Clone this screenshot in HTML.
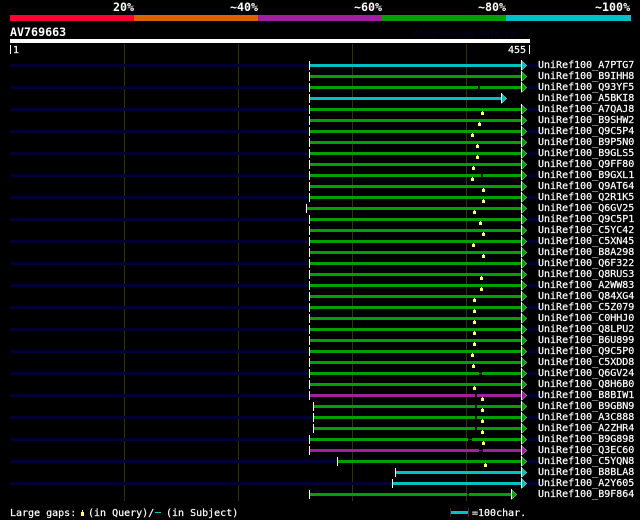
<!DOCTYPE html>
<html>
<head>
<meta charset="utf-8">
<style>
html,body{margin:0;padding:0;background:#000;width:640px;height:520px;overflow:hidden}
svg{display:block}
rect{shape-rendering:crispEdges}
text{font-family:"DejaVu Sans Mono","Liberation Mono",monospace;font-size:10px;fill:#fff;stroke:#fff;stroke-width:0.2px;white-space:pre}
.b{font-weight:bold;font-size:11.67px;stroke:none}
.n{fill:#000033}
.G{fill:#00a000}.C{fill:#00c0c0}.P{fill:#a020a0}
.x{fill:#000}
.w{fill:#fff}
.grid{fill:#333300}
</style>
</head>
<body>
<svg xmlns="http://www.w3.org/2000/svg" width="640" height="520" viewBox="0 0 640 520">
<defs>
<g id="m"><rect x="482" y="3" width="1" height="4" fill="#ffff66"/><rect x="481" y="4" width="3" height="3" fill="#ffff66"/></g>
<g id="tg"><polygon points="521.5,-3.5 526.8,1.5 521.5,6.5" fill="#00a000" stroke="#fff" stroke-width="0.45"/><rect class="w" x="521" y="-4" width="1" height="10"/></g>
<g id="tc"><polygon points="521.5,-3.5 526.8,1.5 521.5,6.5" fill="#00c0c0" stroke="#fff" stroke-width="0.45"/><rect class="w" x="521" y="-4" width="1" height="10"/></g>
<g id="tp"><polygon points="521.5,-3.5 526.8,1.5 521.5,6.5" fill="#a020a0" stroke="#fff" stroke-width="0.45"/><rect class="w" x="521" y="-4" width="1" height="10"/></g>
</defs>
<rect width="640" height="520" fill="#000"/>

<text class="b" x="113" y="11">20%</text>
<text class="b" x="230" y="11">~40%</text>
<text class="b" x="354" y="11">~60%</text>
<text class="b" x="478" y="11">~80%</text>
<text class="b" x="595" y="11">~100%</text>
<rect x="10" y="15" width="124" height="6" fill="#ff0033"/>
<rect x="134" y="15" width="124" height="6" fill="#e06000"/>
<rect x="258" y="15" width="124" height="6" fill="#a020a0"/>
<rect x="382" y="15" width="124" height="6" fill="#00a000"/>
<rect x="506" y="15" width="125" height="6" fill="#00c0c0"/>

<text class="b" x="10" y="36">AV769663</text>
<text x="414" y="36" style="font-size:8.33px;fill:#000033;stroke:none">AlignView.pm Beta rel.7</text>
<rect x="10" y="39" width="520" height="4" fill="#fff"/>
<rect x="10" y="45" width="1" height="9" fill="#fff"/>
<text x="13" y="53">1</text>
<text x="508" y="53">455</text>
<rect x="529" y="45" width="1" height="9" fill="#fff"/>

<rect class="grid" x="124" y="44" width="1" height="457"/>
<rect class="grid" x="238" y="44" width="1" height="457"/>
<rect class="grid" x="352" y="44" width="1" height="457"/>
<rect class="grid" x="466" y="44" width="1" height="457"/>

<g transform="translate(0,64)"><rect class="n" x="10" width="299" height="3"/><rect class="n" x="527" width="11" height="3"/><rect class="C" x="309" width="212" height="3"/><rect class="w" x="309" y="-3" width="1" height="9"/><use href="#tc"/><text x="538" y="4">UniRef100_A7PTG7</text></g>
<g transform="translate(0,75)"><rect class="G" x="309" width="212" height="3"/><rect class="w" x="309" y="-3" width="1" height="9"/><use href="#tg"/><text x="538" y="4">UniRef100_B9IHH8</text></g>
<g transform="translate(0,86)"><rect class="n" x="10" width="299" height="3"/><rect class="n" x="527" width="11" height="3"/><rect class="G" x="309" width="212" height="3"/><rect class="x" x="478" width="2" height="3"/><rect class="w" x="309" y="-3" width="1" height="9"/><use href="#tg"/><text x="538" y="4">UniRef100_Q93YF5</text></g>
<g transform="translate(0,97)"><rect class="C" x="309" width="192" height="3"/><rect class="w" x="309" y="-3" width="1" height="9"/><use href="#tc" x="-20"/><text x="538" y="4">UniRef100_A5BKI8</text></g>
<g transform="translate(0,108)"><rect class="n" x="10" width="299" height="3"/><rect class="n" x="527" width="11" height="3"/><rect class="G" x="309" width="212" height="3"/><rect class="w" x="309" y="-3" width="1" height="9"/><use href="#tg"/><use href="#m"/><text x="538" y="4">UniRef100_A7QAJ8</text></g>
<g transform="translate(0,119)"><rect class="G" x="309" width="212" height="3"/><rect class="w" x="309" y="-3" width="1" height="9"/><use href="#tg"/><use href="#m" x="-3"/><text x="538" y="4">UniRef100_B9SHW2</text></g>
<g transform="translate(0,130)"><rect class="n" x="10" width="299" height="3"/><rect class="n" x="527" width="11" height="3"/><rect class="G" x="309" width="212" height="3"/><rect class="w" x="309" y="-3" width="1" height="9"/><use href="#tg"/><use href="#m" x="-10"/><text x="538" y="4">UniRef100_Q9C5P4</text></g>
<g transform="translate(0,141)"><rect class="G" x="309" width="212" height="3"/><rect class="w" x="309" y="-3" width="1" height="9"/><use href="#tg"/><use href="#m" x="-5"/><text x="538" y="4">UniRef100_B9P5N0</text></g>
<g transform="translate(0,152)"><rect class="n" x="10" width="299" height="3"/><rect class="n" x="527" width="11" height="3"/><rect class="G" x="309" width="212" height="3"/><rect class="w" x="309" y="-3" width="1" height="9"/><use href="#tg"/><use href="#m" x="-5"/><text x="538" y="4">UniRef100_B9GLS5</text></g>
<g transform="translate(0,163)"><rect class="G" x="309" width="212" height="3"/><rect class="w" x="309" y="-3" width="1" height="9"/><use href="#tg"/><use href="#m" x="-9"/><text x="538" y="4">UniRef100_Q9FF80</text></g>
<g transform="translate(0,174)"><rect class="n" x="10" width="299" height="3"/><rect class="n" x="527" width="11" height="3"/><rect class="G" x="309" width="212" height="3"/><rect class="x" x="481" width="2" height="3"/><rect class="w" x="309" y="-3" width="1" height="9"/><use href="#tg"/><use href="#m" x="-10"/><text x="538" y="4">UniRef100_B9GXL1</text></g>
<g transform="translate(0,185)"><rect class="G" x="309" width="212" height="3"/><rect class="w" x="309" y="-3" width="1" height="9"/><use href="#tg"/><use href="#m" x="1"/><text x="538" y="4">UniRef100_Q9AT64</text></g>
<g transform="translate(0,196)"><rect class="n" x="10" width="299" height="3"/><rect class="n" x="527" width="11" height="3"/><rect class="G" x="309" width="212" height="3"/><rect class="w" x="309" y="-3" width="1" height="9"/><use href="#tg"/><use href="#m" x="1"/><text x="538" y="4">UniRef100_Q2R1K5</text></g>
<g transform="translate(0,207)"><rect class="G" x="306" width="215" height="3"/><rect class="w" x="306" y="-3" width="1" height="9"/><use href="#tg"/><use href="#m" x="-8"/><text x="538" y="4">UniRef100_Q6GV25</text></g>
<g transform="translate(0,218)"><rect class="n" x="10" width="299" height="3"/><rect class="n" x="527" width="11" height="3"/><rect class="G" x="309" width="212" height="3"/><rect class="w" x="309" y="-3" width="1" height="9"/><use href="#tg"/><use href="#m" x="-2"/><text x="538" y="4">UniRef100_Q9C5P1</text></g>
<g transform="translate(0,229)"><rect class="G" x="309" width="212" height="3"/><rect class="w" x="309" y="-3" width="1" height="9"/><use href="#tg"/><use href="#m" x="1"/><text x="538" y="4">UniRef100_C5YC42</text></g>
<g transform="translate(0,240)"><rect class="n" x="10" width="299" height="3"/><rect class="n" x="527" width="11" height="3"/><rect class="G" x="309" width="212" height="3"/><rect class="w" x="309" y="-3" width="1" height="9"/><use href="#tg"/><use href="#m" x="-9"/><text x="538" y="4">UniRef100_C5XN45</text></g>
<g transform="translate(0,251)"><rect class="G" x="309" width="212" height="3"/><rect class="w" x="309" y="-3" width="1" height="9"/><use href="#tg"/><use href="#m" x="1"/><text x="538" y="4">UniRef100_B8A298</text></g>
<g transform="translate(0,262)"><rect class="n" x="10" width="299" height="3"/><rect class="n" x="527" width="11" height="3"/><rect class="G" x="309" width="212" height="3"/><rect class="w" x="309" y="-3" width="1" height="9"/><use href="#tg"/><text x="538" y="4">UniRef100_Q6F322</text></g>
<g transform="translate(0,273)"><rect class="G" x="309" width="212" height="3"/><rect class="w" x="309" y="-3" width="1" height="9"/><use href="#tg"/><use href="#m" x="-1"/><text x="538" y="4">UniRef100_Q8RUS3</text></g>
<g transform="translate(0,284)"><rect class="n" x="10" width="299" height="3"/><rect class="n" x="527" width="11" height="3"/><rect class="G" x="309" width="212" height="3"/><rect class="w" x="309" y="-3" width="1" height="9"/><use href="#tg"/><use href="#m" x="-1"/><text x="538" y="4">UniRef100_A2WW83</text></g>
<g transform="translate(0,295)"><rect class="G" x="309" width="212" height="3"/><rect class="w" x="309" y="-3" width="1" height="9"/><use href="#tg"/><use href="#m" x="-8"/><text x="538" y="4">UniRef100_Q84XG4</text></g>
<g transform="translate(0,306)"><rect class="n" x="10" width="299" height="3"/><rect class="n" x="527" width="11" height="3"/><rect class="G" x="309" width="212" height="3"/><rect class="w" x="309" y="-3" width="1" height="9"/><use href="#tg"/><use href="#m" x="-8"/><text x="538" y="4">UniRef100_C5Z079</text></g>
<g transform="translate(0,317)"><rect class="G" x="309" width="212" height="3"/><rect class="w" x="309" y="-3" width="1" height="9"/><use href="#tg"/><use href="#m" x="-8"/><text x="538" y="4">UniRef100_C0HHJ0</text></g>
<g transform="translate(0,328)"><rect class="n" x="10" width="299" height="3"/><rect class="n" x="527" width="11" height="3"/><rect class="G" x="309" width="212" height="3"/><rect class="w" x="309" y="-3" width="1" height="9"/><use href="#tg"/><use href="#m" x="-8"/><text x="538" y="4">UniRef100_Q8LPU2</text></g>
<g transform="translate(0,339)"><rect class="G" x="309" width="212" height="3"/><rect class="w" x="309" y="-3" width="1" height="9"/><use href="#tg"/><use href="#m" x="-8"/><text x="538" y="4">UniRef100_B6U899</text></g>
<g transform="translate(0,350)"><rect class="n" x="10" width="299" height="3"/><rect class="n" x="527" width="11" height="3"/><rect class="G" x="309" width="212" height="3"/><rect class="w" x="309" y="-3" width="1" height="9"/><use href="#tg"/><use href="#m" x="-10"/><text x="538" y="4">UniRef100_Q9C5P0</text></g>
<g transform="translate(0,361)"><rect class="G" x="309" width="212" height="3"/><rect class="w" x="309" y="-3" width="1" height="9"/><use href="#tg"/><use href="#m" x="-9"/><text x="538" y="4">UniRef100_C5XDD8</text></g>
<g transform="translate(0,372)"><rect class="n" x="10" width="299" height="3"/><rect class="n" x="527" width="11" height="3"/><rect class="G" x="309" width="212" height="3"/><rect class="x" x="479" width="3" height="3"/><rect x="479" y="1" width="3" height="1" fill="#006000"/><rect class="w" x="309" y="-3" width="1" height="9"/><use href="#tg"/><text x="538" y="4">UniRef100_Q6GV24</text></g>
<g transform="translate(0,383)"><rect class="G" x="309" width="212" height="3"/><rect class="w" x="309" y="-3" width="1" height="9"/><use href="#tg"/><use href="#m" x="-8"/><text x="538" y="4">UniRef100_Q8H6B0</text></g>
<g transform="translate(0,394)"><rect class="n" x="10" width="299" height="3"/><rect class="n" x="527" width="11" height="3"/><rect class="P" x="309" width="212" height="3"/><rect class="x" x="475" width="2" height="3"/><rect class="w" x="309" y="-3" width="1" height="9"/><use href="#tp"/><use href="#m"/><text x="538" y="4">UniRef100_B8BIW1</text></g>
<g transform="translate(0,405)"><rect class="G" x="313" width="208" height="3"/><rect class="x" x="475" width="2" height="3"/><rect class="w" x="313" y="-3" width="1" height="9"/><use href="#tg"/><use href="#m"/><text x="538" y="4">UniRef100_B9GBN9</text></g>
<g transform="translate(0,416)"><rect class="n" x="10" width="303" height="3"/><rect class="n" x="527" width="11" height="3"/><rect class="G" x="313" width="208" height="3"/><rect class="x" x="475" width="2" height="3"/><rect class="w" x="313" y="-3" width="1" height="9"/><use href="#tg"/><use href="#m"/><text x="538" y="4">UniRef100_A3C888</text></g>
<g transform="translate(0,427)"><rect class="G" x="313" width="208" height="3"/><rect class="x" x="475" width="2" height="3"/><rect class="w" x="313" y="-3" width="1" height="9"/><use href="#tg"/><use href="#m"/><text x="538" y="4">UniRef100_A2ZHR4</text></g>
<g transform="translate(0,438)"><rect class="n" x="10" width="299" height="3"/><rect class="n" x="527" width="11" height="3"/><rect class="G" x="309" width="212" height="3"/><rect class="x" x="468" width="4" height="3"/><rect x="468" y="1" width="4" height="1" fill="#006000"/><rect class="w" x="309" y="-3" width="1" height="9"/><use href="#tg"/><use href="#m" x="1"/><text x="538" y="4">UniRef100_B9G898</text></g>
<g transform="translate(0,449)"><rect class="P" x="309" width="212" height="3"/><rect class="x" x="479" width="4" height="3"/><rect x="479" y="1" width="4" height="1" fill="#601060"/><rect class="w" x="309" y="-3" width="1" height="9"/><use href="#tp"/><text x="538" y="4">UniRef100_Q3EC60</text></g>
<g transform="translate(0,460)"><rect class="n" x="10" width="327" height="3"/><rect class="n" x="527" width="11" height="3"/><rect class="G" x="337" width="184" height="3"/><rect class="w" x="337" y="-3" width="1" height="9"/><use href="#tg"/><use href="#m" x="3"/><text x="538" y="4">UniRef100_C5YQN8</text></g>
<g transform="translate(0,471)"><rect class="C" x="395" width="126" height="3"/><rect class="w" x="395" y="-3" width="1" height="9"/><use href="#tc"/><text x="538" y="4">UniRef100_B8BLA8</text></g>
<g transform="translate(0,482)"><rect class="n" x="10" width="382" height="3"/><rect class="n" x="527" width="11" height="3"/><rect class="C" x="392" width="129" height="3"/><rect class="w" x="392" y="-3" width="1" height="9"/><use href="#tc"/><text x="538" y="4">UniRef100_A2Y605</text></g>
<g transform="translate(0,493)"><rect class="G" x="309" width="202" height="3"/><rect class="x" x="467" width="2" height="3"/><rect x="467" y="1" width="2" height="1" fill="#006000"/><rect class="w" x="309" y="-3" width="1" height="9"/><use href="#tg" x="-10"/><text x="538" y="4">UniRef100_B9F864</text></g>

<text x="10" y="516">Large gaps:</text>
<rect x="82" y="510" width="1" height="6" fill="#ffff66"/><rect x="81" y="512" width="3" height="4" fill="#ffff66"/>
<text x="88" y="516">(in Query)/</text>
<rect x="155" y="512" width="6" height="1" fill="#00c0c0"/>
<text x="166" y="516">(in Subject)</text>
<rect class="grid" x="450" y="508" width="1" height="9"/>
<rect class="grid" x="468" y="508" width="1" height="9"/>
<rect x="451" y="511" width="17" height="3" fill="#00c0c0"/>
<text x="472" y="516">=100char.</text>
</svg>
</body>
</html>
